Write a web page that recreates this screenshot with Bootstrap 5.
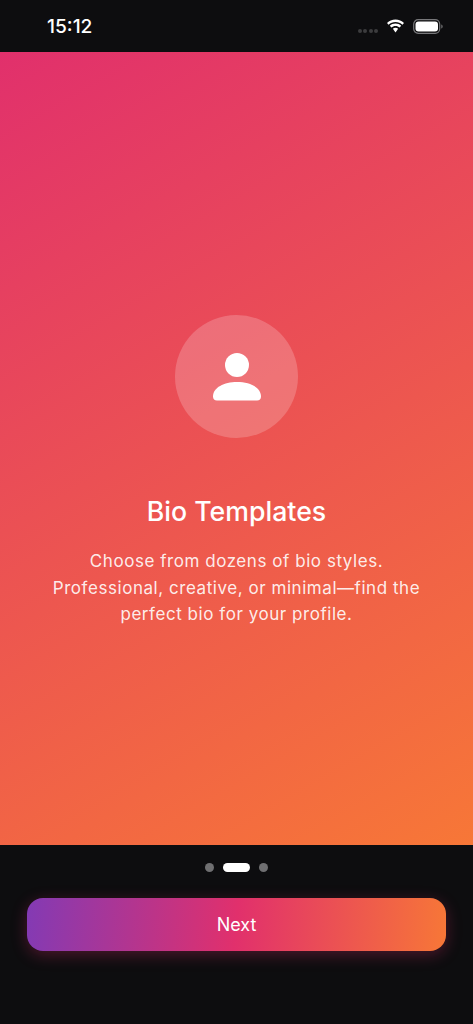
<!DOCTYPE html>
<html lang="en">
  <head>
    <meta charset="utf-8" />
    <meta name="viewport" content="width=device-width, initial-scale=1" />
    <title>Bio Templates</title>
    <link
      href="https://cdn.jsdelivr.net/npm/bootstrap@5.3.3/dist/css/bootstrap.min.css"
      rel="stylesheet"
    />
    <style>
      body {
        background-color: #0d0d0f;
        font-family: Inter, "Liberation Sans", sans-serif;
        color: #fff;
      }
      .app-screen {
        height: 1024px;
      }
      .status-bar {
        height: 52px;
        padding: 0 30px 0 47px;
      }
      .status-time {
        font-size: 19.2px;
        font-weight: 500;
        line-height: 1;
        margin-top: 1px;
      }
      .signal-dot {
        width: 4px;
        height: 4px;
        border-radius: 50%;
        background-color: #3c3c3e;
      }
      .signal-dots {
        gap: 1.5px;
        margin-top: 10px;
      }
      .hero-panel {
        height: 793px;
        background: linear-gradient(150deg, #e1306c 0%, #f77737 100%);
      }
      .icon-circle {
        width: 123px;
        height: 123px;
        margin-top: 263px;
        background-color: rgba(255, 255, 255, 0.2);
      }
      .hero-title {
        margin-top: 56px;
        font-size: 26.7px;
        font-weight: 500;
        line-height: 34px;
      }
      .hero-text {
        margin-top: 20px;
        font-size: 17px;
        font-weight: 400;
        line-height: 26.5px;
        letter-spacing: 0.55px;
        color: rgba(255, 255, 255, 0.9);
      }
      .pager-row {
        height: 9px;
        margin-top: 18px;
        gap: 9px;
      }
      .pager-dot {
        width: 9px;
        height: 9px;
        border-radius: 5px;
        background-color: #6f6f71;
      }
      .pager-dot.is-active {
        width: 27px;
        background-color: #fff;
      }
      .next-btn {
        height: 53px;
        margin: 26px 27px 0;
        width: 419px;
        border: 0;
        border-radius: 16px;
        font-size: 18px;
        font-weight: 400;
        color: #fff;
        background: linear-gradient(95deg, #833ab4 0%, #e1306c 50%, #f77737 100%);
        box-shadow: 0 4px 16px rgba(225, 48, 108, 0.3);
      }
    </style>
  </head>
  <body>
    <div class="app-screen d-flex flex-column">
      <div class="status-bar d-flex align-items-center justify-content-between">
        <span class="status-time">15:12</span>
        <div class="d-flex align-items-center gap-2">
          <div class="signal-dots d-flex">
            <span class="signal-dot"></span>
            <span class="signal-dot"></span>
            <span class="signal-dot"></span>
            <span class="signal-dot"></span>
          </div>
          <svg width="19" height="15" viewBox="0 0 19 14" fill="#fff">
            <path d="M9.5 2.6c2.7 0 5.1 1 6.9 2.7l1.6-1.7C15.8 1.4 12.8 0 9.5 0S3.2 1.4 1 3.6l1.6 1.7C4.400 3.600 6.800 2.600 9.500 2.600z" />
            <path d="M9.500 6.400c1.600 0 3 .6 4.100 1.600l1.600-1.700C13.700 4.900 11.700 4 9.500 4S5.300 4.900 3.800 6.300L5.400 8c1.100-1 2.500-1.600 4.100-1.600z" />
            <path d="M9.500 8.200c-1 0-1.900.4-2.600 1l2.600 3.800 2.600-3.800c-.7-.6-1.600-1-2.600-1z" />
          </svg>
          <svg width="30" height="15" viewBox="0 0 30 15">
            <rect x="0.7" y="0.7" width="26" height="13.600" rx="4.500" fill="none" stroke="#77777a" stroke-width="1.200" />
            <rect x="2.500" y="2.500" width="22.500" height="10" rx="3" fill="#fff" />
            <path d="M28.300 5.500v4c.8-.3 1.300-1.100 1.300-2s-.5-1.700-1.300-2z" fill="#77777a" />
          </svg>
        </div>
      </div>

      <div class="hero-panel d-flex flex-column align-items-center text-center">
        <div class="icon-circle rounded-circle d-flex align-items-center justify-content-center">
          <svg width="48" height="48" viewBox="0 0 48 48" fill="#fff">
            <circle cx="24" cy="12" r="12" />
            <path d="M0 43.500C0 34.500 11 29 24 29s24 5.500 24 14.500c0 2.500-1.500 4-4 4H4c-2.500 0-4-1.500-4-4z" />
          </svg>
        </div>
        <h1 class="hero-title mb-0">Bio Templates</h1>
        <p class="hero-text mb-0">
          Choose from dozens of bio styles.<br />
          Professional, creative, or minimal—find the<br />
          perfect bio for your profile.
        </p>
      </div>

      <div class="pager-row d-flex justify-content-center">
        <span class="pager-dot"></span>
        <span class="pager-dot is-active"></span>
        <span class="pager-dot"></span>
      </div>
      <button type="button" class="next-btn btn">Next</button>
    </div>

    <script src="https://cdn.jsdelivr.net/npm/bootstrap@5.3.3/dist/js/bootstrap.bundle.min.js"></script>
  </body>
</html>
